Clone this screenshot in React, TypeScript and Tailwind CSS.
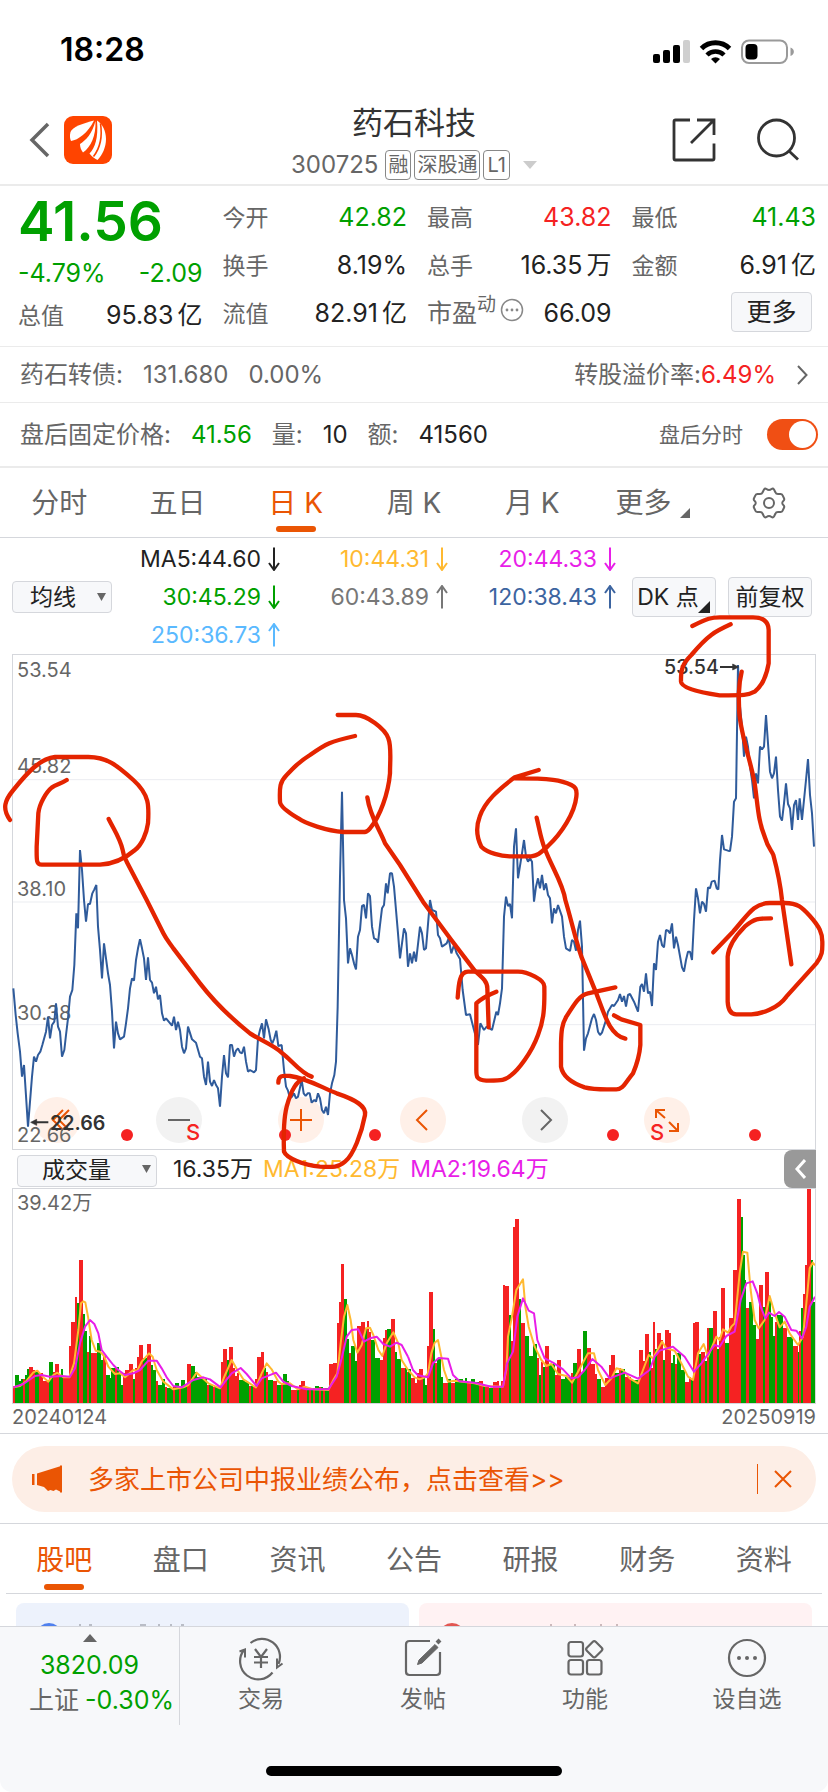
import React from "react";

const GREEN = "#00a000";
const RED = "#f52222";

/* Closing prices, split into the earlier and the later half of the period. */
const PRICE_EARLY =
  "40,325 47,405 53,460 60,515 66,590 72,555 84,740 96,590 102,530 108,545 114,525 121,515 127,495 138,455 144,410 150,475 156,435 163,425 168,370 174,440 180,455 186,530 193,510 198,465 204,415 210,350 217,330 223,255 229,100 234,145 240,-90 246,-30 252,60 258,125 264,72 270,72 277,40 283,28 289,15 294,140 300,210 306,295 312,190 318,235 324,280 330,315 336,395 342,505 348,425 354,460 360,478 372,470 378,430 384,385 390,325 396,295 402,302 408,240 414,205 420,178 426,205 432,235 438,300 444,232 450,300 456,308 462,340 468,320 474,358 480,345 486,400 492,422 498,415 516,437 522,410 528,450 534,425 540,450 546,500 552,520 558,505 564,440 576,478 588,488 600,530 606,535 612,590 618,615 624,545 630,605 636,618 642,600 648,615 654,625 660,680 666,590 672,525 678,580 684,592 690,495 696,495 702,530 708,512 714,505 720,517 726,520 732,500 738,545 744,575 750,570 762,577 768,570 774,475 780,450 786,430 792,475 798,418 806,448 812,480 817,490 823,475 829,452 835,498 845,495 852,570 858,620 864,632 870,655 876,650 882,640 888,655 894,650 905,600 911,640 917,648 923,640 929,640 935,668 943,660 948,665 954,640 960,655 966,690 972,700 978,680 984,705 990,640 996,610 1003,585 1008,545 1013,380 1020,-10 1026,-265 1031,-10 1032,60 1038,115 1044,250 1050,205 1056,225 1062,250 1068,268 1074,170 1080,150 1086,78 1092,75 1098,115 1104,40 1110,48 1116,140 1122,175 1129,178 1134,188 1140,135 1146,85 1152,75 1158,10 1163,40 1170,-20 1176,-20 1182,20 1188,90 1194,160 1200,235 1206,190 1212,145 1218,160 1224,260";
const PRICE_LATE =
  "0,260 6,220 12,250 18,215 24,245 36,140 42,160 48,210 54,205 66,60 72,90 84,95 90,165 96,175 102,200 116,190 122,175 130,220 138,195 146,220 156,237 164,330 174,405 186,403 198,450 210,495 217,430 228,450 236,440 252,450 265,395 270,405 276,370 282,325 288,110 294,50 300,78 306,72 312,115 318,-100 324,-155 330,-5 342,-80 348,-120 354,-70 360,-55 366,-65 372,-55 378,65 384,20 390,-5 396,25 402,-15 408,30 414,10 420,45 426,55 432,130 438,85 444,100 450,75 462,110 468,170 474,205 486,213 492,180 498,185 504,212 510,150 516,122 522,200 528,512 534,475 540,460 552,415 558,402 564,420 570,455 576,465 582,458 594,420 600,395 612,375 618,378 630,360 636,342 642,365 648,348 654,380 660,345 666,342 678,365 690,395 697,320 702,312 708,335 714,280 720,340 726,335 732,378 738,250 744,270 750,185 756,165 762,195 768,202 774,150 780,152 786,160 792,130 798,205 804,170 810,195 822,262 828,275 834,240 840,215 846,215 852,240 858,120 864,25 870,55 876,100 882,65 888,72 894,95 900,22 906,25 911,5 920,2 926,25 931,28 936,-60 942,-135 948,-92 960,-88 966,-87 972,-130 978,-235 984,-245 990,-645 996,-520 1002,-460 1008,-370 1014,-430 1020,-400 1026,-340 1032,-300 1038,-245 1044,-320 1050,-290 1056,-400 1062,-392 1068,-400 1074,-495 1080,-410 1086,-325 1092,-305 1098,-320 1104,-370 1110,-270 1116,-190 1122,-178 1128,-230 1134,-290 1140,-228 1146,-215 1152,-150 1158,-225 1164,-240 1170,-180 1175,-245 1182,-180 1188,-240 1194,-300 1200,-363 1206,-255 1212,-200 1218,-100";

/* Volume columns: start x, top y, direction (r = up day, g = down day). */
const VOLUME_EARLY =
  "39 738 r;45 706 g;57 722 g;64 716 g;70 716 r;76 705 g;82 688 g;88 682 r;100 690 r;106 692 g;118 700 r;130 724 r;142 720 r;148 667 g;159 695 r;166 673 r;177 710 g;183 688 g;190 708 r;207 619 r;213 546 r;225 470 r;232 488 g;237 360 r;249 521 g;255 574 g;262 636 r;268 588 g;274 638 r;291 610 g;303 660 g;309 648 r;318 706 g;329 714 g;334 684 g;346 684 r;352 680 g;358 700 g;363 735 g;369 700 r;375 690 r;387 671 r;400 716 g;405 685 r;411 650 r;417 614 r;429 655 g;441 613 r;453 676 g;459 690 g;468 724 r;474 734 g;485 718 g;495 742 r;502 744 g;520 742 r;526 729 g;537 738 r;543 721 g;555 734 g;561 673 r;573 679 g;585 695 g;592 710 g;604 716 g;621 735 r;628 736 g;640 740 r;646 742 g;663 667 r;669 626 r;681 659 g;687 620 r;699 685 r;705 708 r;712 700 r;718 720 g;736 725 g;747 738 r;754 738 g;760 742 r;766 717 r;772 650 r;783 636 r;792 685 g;798 695 r;804 720 g;820 722 r;832 736 g;844 732 r;850 703 g;862 724 g;868 738 g;874 750 r;892 748 g;897 735 r;904 724 r;915 742 r;921 745 g;927 744 r;933 748 g;940 744 r;946 738 g;958 742 r;964 742 g;970 745 r;976 745 g;987 671 r;999 669 r;1011 550 r;1017 485 r;1023 373 r;1032 476 g;1041 598 g;1047 640 r;1053 618 g;1065 662 g;1071 559 r;1083 547 r;1095 565 g;1101 543 r;1107 575 r;1113 600 g;1125 654 g;1139 660 r;1149 595 r;1155 570 r;1161 568 g;1173 538 r;1185 635 g;1191 657 g;1203 685 r;1215 685 g;1221 695 r;1224 695 r";
const VOLUME_LATE =
  "0 688 g;9 715 r;21 728 r;27 700 r;33 688 r;45 712 g;51 736 g;57 619 r;63 456 r;75 566 g;81 670 r;87 658 g;98 712 g;105 730 r;120 718 g;130 728 r;142 716 g;165 724 g;171 714 g;178 726 r;189 718 g;202 726 g;212 722 r;225 738 g;231 738 r;243 745 g;255 726 r;267 724 r;273 740 g;279 722 r;285 435 r;291 437 r;303 526 g;309 602 r;315 262 r;321 237 r;333 478 g;339 548 r;351 588 g;363 648 g;375 612 g;386 655 r;392 706 g;399 666 r;405 682 g;411 618 r;423 672 g;441 705 r;447 661 r;459 716 g;471 712 g;490 700 r;495 668 g;507 628 r;519 700 g;525 574 g;537 623 r;549 672 r;561 702 r;567 716 g;579 740 r;591 715 r;603 675 r;610 644 r;621 698 g;633 685 r;640 688 g;652 712 r;670 720 g;693 631 r;705 662 r;711 582 r;723 636 g;729 685 r;735 547 r;741 626 g;747 578 r;759 600 r;765 660 g;771 571 r;783 578 r;789 668 g;795 646 g;801 672 r;807 640 g;819 690 g;831 727 r;843 710 r;849 715 g;855 549 r;861 545 r;873 642 g;879 636 r;890 662 g;897 565 r;903 564 g;915 512 r;927 628 g;933 592 r;939 445 r;951 608 g;963 535 r;975 391 r;987 177 r;999 230 g;1005 344 g;1011 421 g;1015 505 r;1022 487 g;1035 555 g;1043 596 r;1053 435 r;1065 502 g;1071 395 r;1083 470 g;1089 530 g;1095 588 g;1101 545 r;1107 525 g;1126 565 r;1138 590 g;1154 618 r;1169 636 g;1173 574 r;1180 503 g;1185 463 r;1191 374 r;1197 144 r;1209 361 g;1215 485 g;1221 485 g";

const MA1_EARLY =
  "40,742 60,738 80,722 100,697 112,692 130,712 145,725 160,705 172,698 190,712 208,712 222,670 235,570 243,490 250,484 256,487 264,530 275,600 287,632 300,635 312,648 325,680 345,702 360,700 375,712 400,690 412,692 425,665 447,640 458,650 470,690 490,725 520,748 550,742 565,735 590,698 605,712 625,730 660,745 672,712 695,660 712,690 730,718 768,742 785,700 800,670 815,688 835,725 845,732 870,730 893,748 915,740 940,748 985,750 1000,720 1012,700 1022,610 1032,530 1042,495 1052,540 1060,600 1072,638 1085,615 1098,565 1110,563 1120,585 1135,630 1147,648 1160,610 1180,577 1195,610 1205,660 1224,690";
const MA2_EARLY =
  "40,742 70,732 105,708 125,705 150,710 185,708 210,710 225,685 240,610 255,560 270,540 283,552 295,580 305,630 320,650 340,675 355,690 375,705 400,700 420,690 445,662 470,662 485,685 500,712 520,738 545,742 580,720 610,712 630,718 662,742 675,725 695,700 722,684 740,702 770,738 785,715 828,698 850,725 875,738 920,748 985,748 1010,710 1025,655 1040,590 1055,570 1075,568 1092,605 1110,595 1130,590 1150,612 1170,620 1190,608 1205,615 1224,650";
const MA1_LATE =
  "0,690 20,712 35,718 50,712 60,700 70,640 80,608 90,600 98,640 108,690 120,725 140,722 200,730 230,738 285,740 295,690 300,590 312,530 325,450 345,418 352,500 362,560 380,620 400,660 415,678 430,672 450,702 475,708 492,728 510,695 540,640 558,640 570,690 592,735 610,715 625,685 645,690 665,715 690,730 705,690 722,645 735,655 762,605 775,625 800,632 820,670 840,710 855,720 870,640 887,612 900,650 925,590 935,600 945,568 960,578 970,560 980,550 995,400 1005,335 1018,338 1028,450 1040,540 1052,565 1070,540 1085,468 1100,520 1115,562 1130,545 1145,580 1170,615 1185,590 1195,490 1205,385 1214,368 1221,376";
const MA2_LATE =
  "0,650 15,690 30,706 60,712 75,670 92,654 120,656 135,705 155,724 200,728 250,740 285,740 297,670 315,635 328,530 345,475 362,512 378,520 388,600 410,655 435,668 465,688 490,715 510,712 530,690 553,657 580,680 605,715 650,698 690,716 725,690 740,650 755,632 795,620 830,650 858,695 880,670 920,615 935,620 955,588 980,575 998,480 1015,430 1034,424 1048,460 1058,500 1072,535 1083,518 1100,528 1113,516 1130,530 1150,570 1165,572 1182,595 1195,560 1205,500 1221,470";

function volumeRects(data: string) {
  const rows = data.split(";").map((r) => r.split(" "));
  return rows.slice(0, -1).map(([x, y, dir], i) => (
    <rect
      key={x}
      x={Number(x)}
      y={Number(y)}
      width={Number(rows[i + 1][0]) - Number(x)}
      height={789 - Number(y)}
      fill={dir === "r" ? RED : GREEN}
    />
  ));
}

function StatusBar() {
  return (
    <div className="flex h-[92px] items-center justify-between pl-[60px] pr-8 pt-2 text-black">
      <time className="text-[32px] font-semibold leading-none">18:28</time>
      <svg className="h-10 w-[144px]" viewBox="0 0 144 40" aria-label="信号与电量">
        <rect x="1" y="24" width="7" height="9" rx="2" />
        <rect x="11" y="20" width="7" height="13" rx="2" />
        <rect x="21" y="15" width="7" height="18" rx="2" />
        <rect x="31" y="10" width="7" height="23" rx="2" fill="#cfcfcf" />
        <g fill="none" stroke="#000" strokeWidth="5">
          <path d="M49.500 18.500a20 20 0 0 1 28 0" />
          <path d="M55 25a12 12 0 0 1 17 0" strokeWidth="4.500" />
        </g>
        <path d="M63.500 33.500l-4.500-4.500a6.500 6.500 0 0 1 9 0z" />
        <rect x="90" y="10.500" width="45" height="22.500" rx="7" fill="none" stroke="#9a9a9a" strokeWidth="2" />
        <path d="M138.500 17.500c4.500 1.500 4.500 7 0 8.500z" fill="#9a9a9a" />
        <rect x="93.500" y="14" width="12" height="15.500" rx="4" />
      </svg>
    </div>
  );
}

function Header() {
  return (
    <header className="relative flex h-[94px] items-center justify-between border-b-2 border-[#ebebeb] px-7 pt-1">
      <div className="flex items-center gap-3">
        <button aria-label="返回">
          <svg className="h-9 w-6" viewBox="0 0 24 36" fill="none" stroke="#666" strokeWidth="3.500">
            <path d="M20 2L4 18l16 16" />
          </svg>
        </button>
        <a href="#home" aria-label="首页">
          <svg className="h-12 w-12" viewBox="0 0 48 48">
            <rect width="48" height="48" rx="9" fill="#ff4400" />
            <path d="M30 4.500C20 7 8 11 6.500 16c-1 4-.5 7 .5 9C14 24 24 17 30 4.500z" fill="#fff" />
            <path d="M31.500 5C28 18 22 24 16 28c0 3 1 6 3 8.500C27 31 32 20 31.500 5z" fill="#fff" />
            <path d="M33 4.500C34.500 22 31 32 25.500 37.500c2 3 5 5 8 6.500 5-5 8.500-13 8.500-21 0-8-3.500-15-9-18.500z" fill="#fff" />
            <path d="M36.500 7.500c2 13 0 24-7 33" fill="none" stroke="#ff4400" strokeWidth="1.600" />
          </svg>
        </a>
      </div>
      <div className="absolute inset-x-48 top-3 flex flex-col items-center">
        <h1 className="text-[31px] leading-[38px] text-[#333]">药石科技</h1>
        <button className="mt-2 flex items-center gap-[3px] text-[#666]">
          <span className="mr-1 text-[24px] leading-[30px]">300725</span>
          <span className="h-[30px] rounded border border-[#888] px-[2px] text-[20px] leading-[28px]">融</span>
          <span className="h-[30px] rounded border border-[#888] px-[2px] text-[20px] leading-[28px]">深股通</span>
          <span className="h-[30px] rounded border border-[#888] px-[3px] text-[20px] leading-[28px]">L1</span>
          <svg className="ml-[10px] h-2 w-[14px]" viewBox="0 0 14 8" fill="#ccc">
            <path d="M0 0h14L7 8z" />
          </svg>
        </button>
      </div>
      <div className="flex items-center gap-10">
        <button aria-label="分享">
          <svg className="h-11 w-11" viewBox="0 0 44 44" fill="none" stroke="#333" strokeWidth="2.800">
            <path d="M18 2H3.500q-1.500 0-1.500 1.500v37Q2 42 3.500 42h37q1.500 0 1.500-1.500V25.500M25 2h17v15M41 3L19 25" />
          </svg>
        </button>
        <button aria-label="搜索">
          <svg className="h-11 w-11" viewBox="0 0 44 44" fill="none" stroke="#333" strokeWidth="2.800">
            <circle cx="20.500" cy="20" r="18" />
            <path d="M33 33l9 8.500" />
          </svg>
        </button>
      </div>
    </header>
  );
}

function Amount({ value, unit }: { value: string; unit?: string }) {
  return (
    <span className="flex items-center gap-1">
      {value}
      {unit && <span>{unit}</span>}
    </span>
  );
}

function Pair({ label, value, unit, tone = "text-[#222]" }: { label: string; value: string; unit?: string; tone?: string }) {
  return (
    <div className="flex h-12 items-center justify-between">
      <dt className="text-[23px] text-[#666]">{label}</dt>
      <dd className={`text-[25px] ${tone}`}>
        <Amount value={value} unit={unit} />
      </dd>
    </div>
  );
}

function Quote() {
  return (
    <section className="grid grid-cols-4 gap-x-5 border-b border-[#ebebeb] pb-2 pl-[18px] pr-3 pt-2">
      <div className="text-[#00a000]">
        <p className="flex h-[54px] items-center text-[55px] font-semibold leading-none">41.56</p>
        <p className="flex h-12 items-center justify-between pt-1 text-[25px]">
          <span>-4.79%</span>
          <span>-2.09</span>
        </p>
        <dl className="flex h-10 items-center justify-between">
          <dt className="text-[23px] text-[#666]">总值</dt>
          <dd className="text-[25px] text-[#222]">
            <Amount value="95.83" unit="亿" />
          </dd>
        </dl>
      </div>
      <dl>
        <Pair label="今开" value="42.82" tone="text-[#00a000]" />
        <Pair label="换手" value="8.19%" />
        <Pair label="流值" value="82.91" unit="亿" />
      </dl>
      <dl>
        <Pair label="最高" value="43.82" tone="text-[#f52222]" />
        <Pair label="总手" value="16.35" unit="万" />
        <div className="flex h-12 items-center justify-between">
          <dt className="flex items-center text-[25px] text-[#666]">
            市盈
            <span className="flex items-center gap-1 pb-5">
              <span className="text-[19px] leading-none">动</span>
              <svg className="mt-3 h-6 w-6" viewBox="0 0 24 24" fill="#888">
                <circle cx="12" cy="12" r="10.500" fill="none" stroke="#888" strokeWidth="1.500" />
                <circle cx="7" cy="12" r="1.400" />
                <circle cx="12" cy="12" r="1.400" />
                <circle cx="17" cy="12" r="1.400" />
              </svg>
            </span>
          </dt>
          <dd className="text-[25px] text-[#222]">66.09</dd>
        </div>
      </dl>
      <div>
        <dl>
          <Pair label="最低" value="41.43" tone="text-[#00a000]" />
          <Pair label="金额" value="6.91" unit="亿" />
        </dl>
        <div className="flex h-12 items-center justify-end pb-1 pr-1">
          <button className="h-10 w-[81px] rounded border border-[#d5d7dc] bg-[#f7f8fa] text-[25px] leading-none text-[#222]">
            更多
          </button>
        </div>
      </div>
    </section>
  );
}

function BondRow() {
  return (
    <a href="#bond" className="flex h-14 items-center border-b border-[#ebebeb] pl-5 pr-5 text-[24px] text-[#666]">
      <span>药石转债:</span>
      <span className="ml-5">131.680</span>
      <span className="ml-5">0.00%</span>
      <span className="ml-auto">转股溢价率:</span>
      <span className="text-[#f52222]">6.49%</span>
      <svg className="ml-5 h-5 w-3" viewBox="0 0 12 20" fill="none" stroke="#666" strokeWidth="2">
        <path d="M2 1l8.500 9L2 19" />
      </svg>
    </a>
  );
}

function AfterHoursRow() {
  return (
    <div className="flex h-[65px] items-center border-b-2 border-[#ebebeb] pl-5 pr-[10px] text-[24px] text-[#666]">
      <span>盘后固定价格:</span>
      <span className="ml-5 text-[#00a000]">41.56</span>
      <span className="ml-5">量:</span>
      <span className="ml-5 text-[#222]">10</span>
      <span className="ml-5">额:</span>
      <span className="ml-5 text-[#222]">41560</span>
      <label className="ml-auto flex items-center gap-6 text-[21px]">
        盘后分时
        <span className="relative flex">
          <input
            type="checkbox"
            defaultChecked
            className="peer h-[31px] w-[51px] appearance-none rounded-full bg-[#ccc] checked:bg-[#f04f14]"
          />
          <span className="pointer-events-none absolute left-[2px] top-[2px] h-[27px] w-[27px] rounded-full bg-white peer-checked:left-[22px]" />
        </span>
      </label>
    </div>
  );
}

function PeriodTabs() {
  const tabs = ["分时", "五日", "日 K", "周 K", "月 K"];
  return (
    <nav className="grid h-[70px] grid-cols-7 border-b border-[#d5d7dc] text-[28px] text-[#666]">
      {tabs.map((t) => {
        const active = t === "日 K";
        return (
          <button key={t} className={active ? "relative text-[#ea5504]" : ""}>
            {t}
            {active && <span className="absolute bottom-[5px] left-1/2 h-[6px] w-10 -translate-x-1/2 rounded-full bg-[#ea5504]" />}
          </button>
        );
      })}
      <button className="flex items-center justify-center gap-2 pl-1">
        更多
        <svg className="mt-5 h-[10px] w-[10px]" viewBox="0 0 10 10" fill="#666">
          <path d="M10 0v10H0z" />
        </svg>
      </button>
      <button aria-label="设置" className="flex items-center justify-center">
        <svg className="h-8 w-[34px]" viewBox="0 0 34 32" fill="none" stroke="#666" strokeWidth="2">
          <path d="M12 2.500Q13 1 14.500 2q2.500 2 5 0Q21 1 22 2.500l1.500 3Q24 7 26 7h2.500q1.500 0 2 1.200l1.500 3q.7 1.400-.5 2.500-2.500 2.300 0 4.600 1.200 1.100.5 2.500l-1.500 3q-.5 1.200-2 1.200H26q-2 0-2.500 1.500l-1.500 3Q21 31 19.500 30q-2.500-2-5 0Q13 31 12 29.500l-1.500-3Q10 25 8 25H5.500q-1.500 0-2-1.200l-1.500-3q-.7-1.400.5-2.500 2.500-2.300 0-4.600Q1.300 12.600 2 11.200l1.500-3Q4 7 5.500 7H8q2 0 2.500-1.500z" />
          <circle cx="17" cy="16" r="5" />
        </svg>
      </button>
    </nav>
  );
}

function TrendArrow({ up }: { up: boolean }) {
  return (
    <svg className="h-6 w-3" viewBox="0 0 12 24" fill="none" stroke="currentColor" strokeWidth="2">
      {up ? <path d="M6 23.500V1M1 8l5-7 5 7" /> : <path d="M6 .5V23M1 16l5 7 5-7" />}
    </svg>
  );
}

function Caret() {
  return (
    <svg className="pointer-events-none absolute right-[6px] top-1/2 h-2 w-[9px] -translate-y-1/2" viewBox="0 0 9 8" fill="#666">
      <path d="M0 0h9L4.500 8z" />
    </svg>
  );
}

function Averages() {
  const items = [
    { text: "MA5:44.60", up: false, tone: "text-[#222]" },
    { text: "10:44.31", up: false, tone: "text-[#ffb930]" },
    { text: "20:44.33", up: false, tone: "text-[#e81ee8]" },
    { text: "30:45.29", up: false, tone: "text-[#00a000]" },
    { text: "60:43.89", up: true, tone: "text-[#777]" },
    { text: "120:38.43", up: true, tone: "text-[#3c64a0]" },
    { text: "250:36.73", up: true, tone: "text-[#5ab9ff]" },
  ];
  return (
    <section className="flex h-[116px] items-center pl-3 pr-4 pt-[2px]">
      <div className="relative h-8 w-25">
        <select
          aria-label="主图指标"
          className="h-full w-full appearance-none rounded border border-[#d5d7dc] bg-[#f7f8fa] pl-[17px] text-[23px] leading-none text-[#222]"
        >
          <option>均线</option>
        </select>
        <Caret />
      </div>
      <ul className="grid flex-1 grid-cols-3">
        {items.map((m) => (
          <li key={m.text} className={`flex h-[38px] items-center justify-end gap-[7px] text-[23px] ${m.tone}`}>
            {m.text}
            <TrendArrow up={m.up} />
          </li>
        ))}
      </ul>
      <div className="flex gap-3 pl-4">
        <button className="relative h-10 w-21 rounded border border-[#d5d7dc] bg-[#f7f8fa] pr-3 text-[23px] leading-none text-[#222]">
          DK 点
          <svg className="absolute bottom-[3px] right-[5px] h-3 w-3" viewBox="0 0 12 12" fill="#222">
            <path d="M12 0v12H0z" />
          </svg>
        </button>
        <button className="h-10 w-21 rounded border border-[#d5d7dc] bg-[#f7f8fa] text-[23px] leading-none text-[#222]">
          前复权
        </button>
      </div>
    </section>
  );
}

const ROUND = "flex h-[46px] w-[46px] items-center justify-center rounded-full";

function ChartControls() {
  const icons = [
    { label: "后退", d: "M22 6L12 16l10 10M28 6L18 16l10 10", warm: true },
    { label: "缩小", d: "M5 16h22", warm: false },
    { label: "放大", d: "M5 16h22M16 5v22", warm: true },
    { label: "左移", d: "M20 6L10 16l10 10", warm: true },
    { label: "右移", d: "M12 6l10 10-10 10", warm: false },
    { label: "全屏", d: "M5 14V6h9M6 7l8 7M27 19v8h-9M26 26l-8-8", warm: true },
  ];
  return (
    <div className="absolute bottom-[6px] left-[21px] flex gap-[76px]">
      {icons.map((i) => (
        <button key={i.label} aria-label={i.label} className={`${ROUND} ${i.warm ? "bg-[#fff0e8]" : "bg-[#f2f2f2]"}`}>
          <svg className="h-8 w-8" viewBox="0 0 32 32" fill="none" stroke={i.warm ? "#ea5504" : "#666"} strokeWidth="2">
            <path d={i.d} />
          </svg>
        </button>
      ))}
    </div>
  );
}

function PriceChart() {
  return (
    <section className="relative ml-3 mr-3">
      <div className="relative border border-[#d5d7dc]">
        <svg className="block h-auto w-full" viewBox="39 165 2406 1482" fill="none">
          <path d="M39 539H2445M39 906H2445M39 1274H2445" stroke="#ebedf1" strokeWidth="3" />
        </svg>
        <ChartControls />
        <ol className="pointer-events-none absolute inset-0 text-[20px] leading-[24px] text-[#666]">
          <li className="absolute left-1 top-[3px]">53.54</li>
          <li className="absolute left-1 top-[20%]">45.82</li>
          <li className="absolute left-1 top-[45%]">38.10</li>
          <li className="absolute left-1 top-[70%]">30.38</li>
          <li className="absolute bottom-[2px] left-1">22.66</li>
        </ol>
      </div>
      <svg className="pointer-events-none absolute inset-0 z-10 h-full w-full overflow-visible" viewBox="36 162 2412 1488" fill="none">
        <g stroke="#2f5b9b" strokeWidth="6" strokeLinejoin="bevel">
          <polyline transform="translate(0 840)" points={PRICE_EARLY} />
          <polyline transform="translate(1224 840)" points={PRICE_LATE} />
        </g>
        <g fill="#333" stroke="#333">
          <path d="M100 1567H145M2160 201H2205" strokeWidth="6" />
          <path d="M92 1567l18-9v18zM2216 201l-18-9v18z" strokeWidth="2" />
        </g>
        <g fill="#333" fontSize="59">
          <text x="150" y="1589" fontWeight="600">22.66</text>
          <text x="1992" y="223" fontWeight="500">53.54</text>
        </g>
        <g fill={RED}>
          <circle cx="381" cy="1605" r="18" />
          <circle cx="855" cy="1605" r="18" />
          <circle cx="1125" cy="1605" r="18" />
          <circle cx="1839" cy="1605" r="18" />
          <circle cx="2265" cy="1605" r="18" />
          <g fontSize="66" fontWeight="500" textAnchor="middle">
            <text x="579" y="1620">S</text>
            <text x="1971" y="1620">S</text>
          </g>
        </g>
        {/* Hand-drawn marks */}
        <g stroke="#e42400" strokeWidth="13" strokeLinecap="round" strokeLinejoin="round">
          <path d="M30 660C5 625 15 600 40 570C80 520 120 475 165 471H265C320 471 350 495 400 540C450 585 447 620 444 670C440 700 425 735 405 750C370 780 340 792 300 794H125C108 794 110 780 110 740L115 640C118 610 140 575 155 563C170 553 180 553 200 540" />
          <path d="M326 657C345 695 360 715 368 750C370 765 372 772 380 785L440 900L490 1000C500 1020 510 1030 520 1045L600 1150C650 1215 700 1260 750 1300C780 1320 820 1335 845 1358C875 1380 900 1418 935 1430" />
          <path d="M835 1448C835 1424 850 1427 870 1428C920 1435 960 1460 1010 1480C1070 1500 1100 1520 1095 1545C1085 1600 1060 1665 1035 1685C1015 1702 1000 1702 960 1700C910 1695 860 1675 852 1655C850 1600 850 1560 860 1520C875 1465 890 1445 912 1435" />
          <path d="M1013 345H1068C1100 345 1155 385 1165 415C1175 440 1170 480 1170 520C1165 580 1140 650 1110 685C1100 698 1095 696 1080 696H1030C980 693 915 670 895 655C870 640 840 620 840 605C838 560 840 545 860 525C890 495 890 490 930 465C980 430 990 425 1065 408" />
          <path d="M1102 592C1110 650 1140 690 1155 730L1200 795L1269 905L1354 1020L1424 1112C1450 1135 1462 1145 1462 1165L1466 1282" />
          <g transform="translate(1224 840)">
            <path d="M149 353C152 310 155 275 180 275H330C360 275 410 300 409 320C410 380 408 420 390 465C370 520 330 570 310 585C290 603 280 602 235 602C205 600 205 590 205 570V370C215 360 240 345 265 335" />
            <path d="M622 322L540 340C515 345 500 370 475 410C460 435 460 460 459 490V560C465 595 500 612 530 622C560 630 580 628 625 628C645 628 650 610 675 580C690 545 695 520 697 495V435L640 418C630 413 625 410 618 406" />
            <path d="M916 217L975 155C1020 105 1035 70 1085 69H1130C1170 70 1180 80 1205 107C1235 140 1243 160 1243 185C1243 210 1245 225 1225 250L1135 350C1110 385 1060 402 1030 403H985C965 403 960 385 959 365V230C962 190 990 160 1010 140C1040 115 1050 115 1089 115" />
          </g>
          <g transform="translate(1224 0)">
            <path d="M392 510L320 532C270 570 230 605 215 650C200 690 210 720 220 740C240 760 280 768 305 769H370C395 765 400 755 420 738C460 700 500 640 505 590C508 565 500 560 490 555C460 540 430 535 320 535" />
            <path d="M386 653C395 690 398 715 410 745C430 800 465 850 472 900C490 960 500 1010 520 1070L565 1180C590 1245 605 1305 652 1316" />
            <path d="M853 78C900 55 910 52 935 52H1035C1065 52 1082 65 1082 90V190C1075 230 1060 260 1040 275C1020 286 1010 286 935 286C880 278 820 265 819 245C818 205 825 190 850 165C900 105 920 95 968 73" />
            <path d="M1001 215C990 260 992 300 994 340C1000 410 1030 490 1040 550C1050 620 1050 660 1070 710C1080 745 1090 750 1096 765C1112 825 1118 860 1122 900L1150 1093" />
          </g>
        </g>
      </svg>
    </section>
  );
}

function VolumeChart() {
  return (
    <section className="ml-3 mr-3">
      <div className="flex h-[38px] items-center text-[23px]">
        <div className="relative ml-[5px] mr-4 h-8 w-[140px]">
          <select
            aria-label="副图指标"
            className="h-full w-full appearance-none rounded border border-[#d5d7dc] bg-[#f7f8fa] pl-6 text-[23px] leading-none text-[#222]"
          >
            <option>成交量</option>
          </select>
          <Caret />
        </div>
        <span className="text-[#222]">16.35万</span>
        <span className="ml-[10px] text-[#ffb930]">MA1:25.28万</span>
        <span className="ml-[10px] text-[#e81ee8]">MA2:19.64万</span>
        <button aria-label="收起" className="ml-auto flex h-full w-8 items-center justify-center rounded-l-lg bg-[#999]">
          <svg className="h-5 w-3" viewBox="0 0 12 20" fill="none" stroke="#fff" strokeWidth="3">
            <path d="M11 1L3 10l8 9" />
          </svg>
        </button>
      </div>
      <div className="relative border border-[#d5d7dc]">
        <svg className="block h-auto w-full" viewBox="39 147 2406 642" fill="none">
          <g shapeRendering="crispEdges">{volumeRects(VOLUME_EARLY)}</g>
          <g transform="translate(1224 0)" shapeRendering="crispEdges">{volumeRects(VOLUME_LATE)}</g>
          <g strokeWidth="6" strokeLinejoin="round">
            <g stroke="#ffb930">
              <polyline points={MA1_EARLY} />
              <polyline transform="translate(1224 0)" points={MA1_LATE} />
            </g>
            <g stroke="#e81ee8">
              <polyline points={MA2_EARLY} />
              <polyline transform="translate(1224 0)" points={MA2_LATE} />
            </g>
          </g>
        </svg>
        <span className="absolute left-1 top-[2px] text-[20px] leading-[24px] text-[#666]">39.42万</span>
      </div>
      <div className="flex h-[29px] items-center justify-between pb-1 text-[20px] leading-none text-[#666]">
        <time>20240124</time>
        <time>20250919</time>
      </div>
    </section>
  );
}

function Notice() {
  return (
    <section className="border-y border-[#d5d7dc] px-3 pb-[11px] pt-3">
      <div className="flex h-[66px] items-center rounded-full bg-[#fdeee6] pl-5 pr-6 text-[#ea5504]">
        <svg className="h-7 w-8" viewBox="0 0 32 28" fill="#ea5504">
          <path d="M0 9h2.500v11H0zM5 8.500L29 1V27l-5-2.500-2.500 1.500-3-1-2.500 1-4-4-7-2z" />
          <path d="M28 .5h2v27h-2z" />
        </svg>
        <a href="#report" className="ml-6 flex-1 text-[26px]">
          多家上市公司中报业绩公布，点击查看&gt;&gt;
        </a>
        <button aria-label="关闭" className="flex h-[30px] items-center border-l border-[#ea5504] pl-4">
          <svg className="h-[18px] w-[18px]" viewBox="0 0 18 18" fill="none" stroke="#ea5504" strokeWidth="2">
            <path d="M1 1l16 16M17 1L1 17" />
          </svg>
        </button>
      </div>
    </section>
  );
}

function InfoTabs() {
  const tabs = ["股吧", "盘口", "资讯", "公告", "研报", "财务", "资料"];
  return (
    <nav className="mx-[6px] grid h-[70px] grid-cols-7 border-b border-[#d5d7dc] text-[28px] text-[#666]">
      {tabs.map((t, i) => (
        <button key={t} className={i === 0 ? "relative pt-[2px] text-[#ea5504]" : "pt-[2px]"}>
          {t}
          {i === 0 && <span className="absolute bottom-[3px] left-1/2 h-[6px] w-10 -translate-x-1/2 rounded-full bg-[#ea5504]" />}
        </button>
      ))}
    </nav>
  );
}

function CardPeek() {
  return (
    <section className="grid h-8 grid-cols-2 gap-[10px] overflow-hidden px-4 pt-[9px]">
      <div className="rounded-t-lg bg-[#edf2fc]">
        <svg className="h-[23px] w-full" viewBox="0 0 393 23" preserveAspectRatio="xMinYMin slice">
          <circle cx="33" cy="33" r="13" fill="#4f80ee" />
          <path d="M63 22h2m8 0h3m48 0h6m12 0h2m10 0h2m9 0h3" stroke="#b9bdc6" strokeWidth="2" />
        </svg>
      </div>
      <div className="rounded-t-lg bg-[#fff2f3]">
        <svg className="h-[23px] w-full" viewBox="0 0 393 23" preserveAspectRatio="xMinYMin slice">
          <circle cx="33" cy="33" r="13" fill="#e25651" />
          <path d="M131 22h2m22 0h2m24 0h2m14 0h2" stroke="#ccb9bb" strokeWidth="2" />
        </svg>
      </div>
    </section>
  );
}

function BottomBar() {
  const cell = "flex flex-1 flex-col items-center pt-3";
  const icon = "h-[38px] w-[42px] overflow-visible";
  return (
    <footer className="flex h-[166px] flex-col justify-between rounded-b-xl border-t border-[#d5d7dc] bg-[#f7f8fa] text-[#666]">
      <div className="flex h-[98px]">
        <a href="#index" className="flex w-[180px] flex-col items-center border-r border-[#d5d7dc] pt-[7px] text-[#00a000]">
          <svg className="h-2 w-[14px]" viewBox="0 0 14 8" fill="#666">
            <path d="M7 0l7 8H0z" />
          </svg>
          <span className="mt-[6px] text-[25px] leading-[34px]">3820.09</span>
          <span className="flex items-center gap-[6px] self-end pr-[5px] text-[25px] leading-[36px]">
            <span className="text-[#666]">上证</span>-0.30%
          </span>
        </a>
        <a href="#trade" className={cell}>
          <svg className={icon} viewBox="0 0 42 38" fill="none" stroke="#666" strokeWidth="2.200">
            <path d="M10.500 4A18 18 0 0 1 38.500 25M32.500 33.500A18 18 0 0 1 4 11" />
            <path d="M-.5 12.500L5 10.500v8M42.500 24.500L37 28.500v-9" strokeWidth="2" />
            <path d="M15 10l6 8 6-8M21 18v11M14 18h14M14 23.500h14" />
          </svg>
          <span className="mt-[5px] text-[23px] leading-[34px]">交易</span>
        </a>
        <a href="#post" className={cell}>
          <svg className={icon} viewBox="0 0 42 38" fill="none" stroke="#666" strokeWidth="2.200">
            <path d="M28 2H7.500Q4 2 4 5.500v27Q4 36 7.500 36h27q3.500 0 3.500-3.500V13" />
            <path d="M33 5.500l3 3L20 24l-4.500 1.500L17 21z" fill="#666" strokeWidth="1" />
            <path d="M35 4l3-3" strokeWidth="4" />
          </svg>
          <span className="mt-[5px] text-[23px] leading-[34px]">发帖</span>
        </a>
        <a href="#tools" className={cell}>
          <svg className={icon} viewBox="0 0 42 38" fill="none" stroke="#666" strokeWidth="2.200">
            <rect x="4.500" y="3" width="14.500" height="14.500" rx="2.500" />
            <rect x="4.500" y="21" width="14.500" height="14.500" rx="2.500" />
            <rect x="23" y="21" width="14.500" height="14.500" rx="2.500" />
            <rect x="24" y="4" width="12.500" height="12.500" rx="2" transform="rotate(45 30.250 10.250)" />
          </svg>
          <span className="mt-[5px] text-[23px] leading-[34px]">功能</span>
        </a>
        <a href="#watch" className={cell}>
          <svg className={icon} viewBox="0 0 42 38" fill="#666">
            <circle cx="21" cy="19" r="18" fill="none" stroke="#666" strokeWidth="2.200" />
            <circle cx="13" cy="19" r="2" />
            <circle cx="21" cy="19" r="2" />
            <circle cx="29" cy="19" r="2" />
          </svg>
          <span className="mt-[5px] text-[23px] leading-[34px]">设自选</span>
        </a>
      </div>
      <div className="mb-4 h-[10px] w-[296px] self-center rounded-full bg-black" />
    </footer>
  );
}

export default function App() {
  return (
    <main className="flex min-h-screen flex-col bg-white font-['Inter','Noto_Sans_CJK_SC',sans-serif]">
      <StatusBar />
      <Header />
      <Quote />
      <BondRow />
      <AfterHoursRow />
      <PeriodTabs />
      <Averages />
      <PriceChart />
      <VolumeChart />
      <Notice />
      <InfoTabs />
      <CardPeek />
      <BottomBar />
    </main>
  );
}
